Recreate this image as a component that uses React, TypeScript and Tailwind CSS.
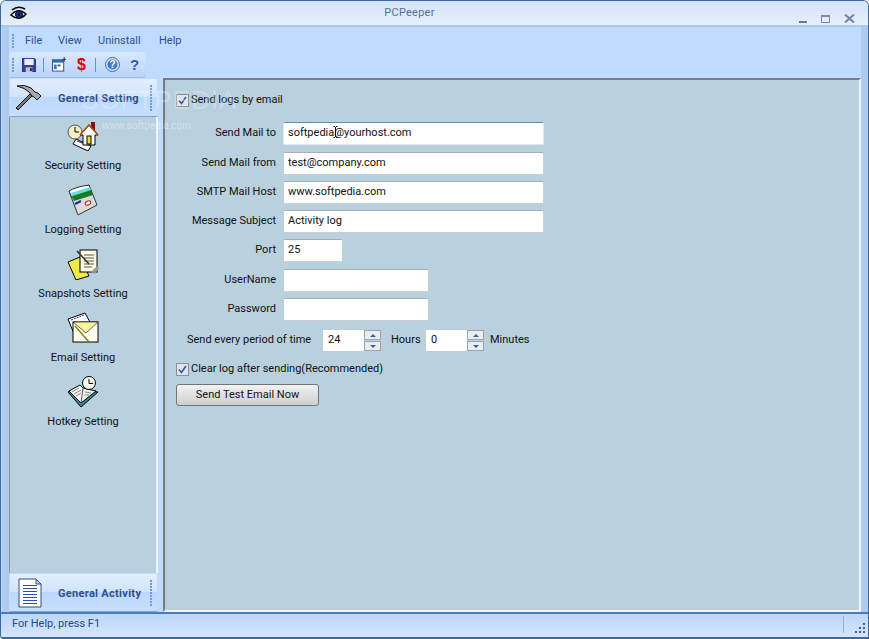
import React from "react";

const font = { fontFamily: 'Roboto, Tahoma, sans-serif' };

function Eye() {
  return (
    <svg width="18" height="16" viewBox="0 0 18 16">
      <path d="M2 4 Q8 -1 15 3" fill="none" stroke="#000" strokeWidth="1.6" />
      <path d="M1 9 Q8 1 16 8 Q9 16 1 9Z" fill="#fff" stroke="#000" strokeWidth="1.6" />
      <circle cx="9" cy="8.5" r="3.6" fill="#16398c" stroke="#000" />
      <circle cx="9" cy="8.5" r="1.3" fill="#000" />
    </svg>
  );
}
function Floppy() {
  return (
    <svg width="14" height="14" viewBox="0 0 15 15">
      <path d="M0 0H13L15 2V15H0Z" fill="#3a3f9e" stroke="#1e2370" strokeWidth=".6" />
      <rect x="2.5" y="1" width="10" height="6.5" fill="#e8ecf8" />
      <rect x="4" y="10" width="7" height="5" fill="#c0c4d8" />
      <rect x="8.5" y="11" width="2" height="3" fill="#222" />
    </svg>
  );
}
function Calendar() {
  return (
    <svg width="15" height="15" viewBox="0 0 16 16">
      <rect x="0.5" y="3" width="12" height="12" fill="#fff" stroke="#28527f" />
      <rect x="0.5" y="3" width="12" height="3" fill="#2b6fb0" />
      <rect x="2" y="8" width="3" height="5" fill="#2f7cc0" />
      <rect x="6" y="8" width="3" height="2" fill="#555" />
      <path d="M13 0V5M11 2.5H15" stroke="#334" />
    </svg>
  );
}
function HelpCircle() {
  return (
    <svg width="15" height="15" viewBox="0 0 15 15">
      <circle cx="7.5" cy="7.5" r="7" fill="#cfe0f8" stroke="#3f6fb5" />
      <circle cx="7.5" cy="7.5" r="5" fill="#3f78cf" />
      <text x="7.5" y="11" textAnchor="middle" fontSize="10" fontWeight="700" fill="#fff" fontFamily="Liberation Sans">?</text>
    </svg>
  );
}
function Hammer() {
  return (
    <svg width="27" height="27" viewBox="0 0 27 27">
      <path d="M1 24 L3 26 L17 12 L15 10Z" fill="#777" stroke="#111" strokeWidth="1" />
      <path d="M2 2 Q10 0 16 4 L20 8 L23 9 L26 12 L22 16 L19 13 L17 12 L14 8 Q10 4 2 2Z" fill="#a8a8a8" stroke="#111" strokeWidth="1" />
    </svg>
  );
}
function Doc() {
  return (
    <svg width="24" height="30" viewBox="0 0 24 30" className="ml-[3px]">
      <path d="M1 1H18L23 6V29H1Z" fill="#fff" stroke="#3b4d70" />
      <path d="M18 1V6H23Z" fill="#c8d0dc" stroke="#3b4d70" />
      {[7, 10, 13, 16, 19, 22, 25].map((y) => (
        <path key={y} d={`M5 ${y}.5H19`} stroke="#2a4db8" />
      ))}
    </svg>
  );
}
function Home() {
  return (
    <svg width="32" height="30" viewBox="0 0 32 30">
      <path d="M9 18 L24 25 L21 30 L6 23Z" fill="#fff" stroke="#000" />
      <path d="M10 20 L20 24" stroke="#2233aa" />
      <circle cx="8" cy="11" r="7" fill="#f4f0c4" stroke="#555" />
      <path d="M8 6V11H12" stroke="#000" fill="none" />
      <rect x="24" y="1" width="4" height="8" fill="#7a1010" />
      <path d="M13 14 L22 4 L31 14 L28 14 V24 H16 V14Z" fill="#fff" stroke="#000" />
      <path d="M13 14 L22 4 L31 14" fill="none" stroke="#b04a10" strokeWidth="1.6" />
      <rect x="20" y="15" width="4" height="8" fill="#e8e040" stroke="#000" />
    </svg>
  );
}
function Calc() {
  return (
    <svg width="32" height="32" viewBox="0 0 32 32">
      <path d="M2 7 L22 1 L30 21 L11 31Z" fill="#dcdcdc" stroke="#333" />
      <path d="M2 7 Q8 3 22 1 L24 7 L5 14Z" fill="#fff" stroke="#333" />
      <path d="M4 9 L23 3 L24 6 L5 12Z" fill="#66e0e0" />
      <path d="M5 12 L24 6 L26 11 L7 17Z" fill="#157a2a" />
      <path d="M8 20 L14 17" stroke="#1a2aa8" strokeWidth="2" />
      <ellipse cx="21" cy="19" rx="3" ry="2" fill="#fff" stroke="#b02020" transform="rotate(-25 21 19)" />
    </svg>
  );
}
function Notes() {
  return (
    <svg width="32" height="32" viewBox="0 0 32 32">
      <path d="M1 14 L13 9 L22 28 L9 32Z" fill="#efe94a" stroke="#000" />
      <rect x="13" y="2" width="17" height="22" fill="#fffde0" stroke="#000" />
      <path d="M17 7H27M17 10H27M17 13H27M17 16H27M17 19H25" stroke="#555" />
      <path d="M10 3 L22 16" stroke="#333" strokeWidth="1.5" />
      <path d="M30 18 L32 20 L28 26 L24 24Z" fill="#999" />
    </svg>
  );
}
function Mail() {
  return (
    <svg width="32" height="32" viewBox="0 0 32 32">
      <path d="M1 7 L18 1 L24 12 L8 24Z" fill="#fff" stroke="#000" />
      <path d="M4 8 L17 3" stroke="#2233aa" strokeDasharray="2 1" />
      <rect x="6" y="10" width="25" height="20" fill="#fffef0" stroke="#000" />
      <path d="M6 10 L19 21 L31 10Z" fill="#f8f5a0" stroke="#000" strokeWidth=".6" />
      <path d="M8 14 L22 30" stroke="#7a7a10" strokeWidth="1.4" />
    </svg>
  );
}
function Book() {
  return (
    <svg width="32" height="32" viewBox="0 0 32 32">
      <path d="M1 16 L13 10 L16 14 L31 16 L14 31Z" fill="#2f8c8c" stroke="#000" />
      <path d="M2 15 L13 9 L16 12 L29 15 L14 27Z" fill="#f4f4f4" stroke="#000" />
      <path d="M16 12 L14 27" stroke="#555" />
      <path d="M5 16 L12 12M7 18 L14 14M9 20 L14 17M18 16 L24 17M17 19 L22 19" stroke="#888" />
      <circle cx="22" cy="7" r="6.5" fill="#f6f6f0" stroke="#000" />
      <path d="M22 3V7.5H26" stroke="#000" fill="none" />
    </svg>
  );
}
function Grip({ className, n = 5 }: { className: string; n?: number }) {
  return (
    <div className={`flex flex-col gap-[1px] ${className}`}>
      {Array.from({ length: n }).map((_, i) => (
        <div key={i} className="w-[2px] h-[2px] bg-[#6f9bdc]" />
      ))}
    </div>
  );
}
function Check() {
  return (
    <div className="w-[13px] h-[13px] border border-[#8f8f8f] bg-[#dfe4ea] flex items-center justify-center shrink-0">
      <svg width="9" height="9" viewBox="0 0 9 9">
        <path d="M1 4.5 L3.5 7.5 L8 1" fill="none" stroke="#3b55a8" strokeWidth="1.6" />
      </svg>
    </div>
  );
}
function FormRow({ label, value, w, mt, focus }: { label: string; value: string; w: string; mt: string; focus?: boolean }) {
  return (
    <div className={`flex items-center ${mt}`}>
      <div className="w-[107px] text-right text-[#111] pr-[7px] pb-[2px]">{label}</div>
      <div className={`${w} h-[23px] bg-white border ${focus ? "border-[#dfe8ef] border-t-[#5d8db8]" : "border-[#c6ced6] border-t-[#abadb3]"} rounded-[2px] pl-[4px] pb-[2px] flex items-center text-[#111]`}>{value}</div>
    </div>
  );
}
function Spin({ value }: { value: string }) {
  return (
    <div className="flex w-[60px] h-[23px] bg-white border border-[#c4ccd4] pl-[5px] items-center text-[#111]">
      <span className="flex-1 pb-[2px]">{value}</span>
      <div className="flex flex-col w-[17px] h-full gap-[1px] bg-[#b9d0de]">
        {["M1 4L4 1L7 4Z", "M1 1L4 4L7 1Z"].map((d) => (
          <div key={d} className="flex-1 border border-[#9aa4ae] bg-[#e8edf2] flex items-center justify-center">
            <svg width="8" height="5" viewBox="0 0 8 5"><path d={d} fill="#3a5f9c" /></svg>
          </div>
        ))}
      </div>
    </div>
  );
}
function NavItem({ icon, label, mt }: { icon: React.ReactNode; label: string; mt: string }) {
  return (
    <div className={`flex flex-col items-center ${mt}`}>
      <div className="h-[32px] flex items-center justify-center">{icon}</div>
      <div className="mt-[7px] leading-[14px] text-[#111]">{label}</div>
    </div>
  );
}
function PanelButton({ icon, label, h, pt }: { icon: React.ReactNode; label: string; h: string; pt: string }) {
  return (
    <div className={`relative ${h} flex items-center bg-[linear-gradient(to_bottom,#e2eefd_0%,#d2e4fb_48%,#bdd8fd_50%,#c8dffc_100%)] border border-[#c5daf6] border-b-[#7ea5dc]`}>
      <div className="w-[48px] pl-[5px] flex justify-start">{icon}</div>
      <div className={`font-bold text-[#2f4f8f] tracking-[0.3px] ${pt}`}>{label}</div>
      <Grip className="absolute right-[5px] top-1/2 -translate-y-1/2" n={9} />
    </div>
  );
}

export default function App() {
  return (
    <div style={font} className="w-[869px] h-[639px] flex flex-col text-[11px] leading-[14px] bg-[#bfdbff] border border-[#3d6a9e] border-b-2 rounded-t-[6px] rounded-bl-[4px] overflow-hidden relative">
      <div className="h-[26px] shrink-0 flex items-center relative bg-gradient-to-b from-[#d3e2f7] to-[#e6f0fc] border-b-2 border-[#a9c9f0]">
        <div className="absolute left-[9px] top-[5px]"><Eye /></div>
        <div className="flex-1 text-center text-[#5b6f90] pr-[50px] -mt-[1px] tracking-[0.25px]">PCPeeper</div>
        <div className="absolute right-[13px] top-[13px] flex items-center">
          <div className="w-[8px] h-[2px] bg-[#6b7a90] mr-[14px] mt-[6px]" />
          <div className="w-[9px] h-[8px] border border-[#7a8ca8] border-t-2 mr-[14px]" />
          <svg width="11" height="9" viewBox="0 0 11 9"><path d="M1 0.5L10 8.5M10 0.5L1 8.5" stroke="#6f86a8" strokeWidth="2" /></svg>
        </div>
      </div>

      <div className="flex-1 flex min-h-0">
        <div className="w-[7px] shrink-0 bg-[#afcbf0] ml-[1px]" />
        <div className="flex-1 flex flex-col min-w-0">
          <div className="h-[25px] flex items-center pl-[3px] text-[#2f4f8f] shrink-0 pt-[2px]">
            <Grip className="mr-[11px]" />
            <span className="w-[33px]">File</span>
            <span className="w-[40px]">View</span>
            <span className="w-[61px]">Uninstall</span>
            <span>Help</span>
          </div>
          <div className="h-[26px] w-[137px] shrink-0 flex items-center pl-[3px] rounded-r-[4px] rounded-tl-[3px] bg-gradient-to-b from-[#d8e7fc] to-[#b9d5fb] border-b border-[#9dbce6]">
            <Grip className="mr-[8px]" />
            <Floppy />
            <div className="w-[1px] h-[14px] bg-[#6f8fbf] ml-[7px] mr-[8px]" />
            <Calendar />
            <div className="w-[10px]" />
            <span className="text-[#e00000] font-bold text-[16px] w-[9px] text-center" style={{ fontFamily: '"Liberation Sans", sans-serif' }}>$</span>
            <div className="w-[1px] h-[14px] bg-[#6f8fbf] mx-[9px]" />
            <HelpCircle />
            <span className="ml-[10px] text-[#2f5fa8] font-bold text-[15px]" style={{ fontFamily: '"Liberation Sans", sans-serif' }}>?</span>
          </div>
          <div className="flex-1 flex min-h-0">
            <div className="w-[149px] shrink-0 flex flex-col">
              <PanelButton icon={<Hammer />} label="General Setting" h="h-[39px]" pt="pt-[3px]" />
              <div className="flex-1 bg-[#b9d0de] border-r-2 border-l border-[#eef4f8] border-l-[#8a9aa8]">
                <NavItem icon={<Home />} label="Security Setting" mt="mt-[3px]" />
                <NavItem icon={<Calc />} label="Logging Setting" mt="mt-[11px]" />
                <NavItem icon={<Notes />} label="Snapshots Setting" mt="mt-[11px]" />
                <NavItem icon={<Mail />} label="Email Setting" mt="mt-[11px]" />
                <NavItem icon={<Book />} label="Hotkey Setting" mt="mt-[11px]" />
              </div>
              <PanelButton icon={<Doc />} label="General Activity" h="h-[39px]" pt="pt-[2px]" />
            </div>
            <div className="w-[5px] shrink-0" />
            <div className="flex-1 bg-[#b9d0de] border-t-2 border-l-2 border-[#777c82] border-r-2 border-r-[#eef4f8] border-b-2 border-b-[#eef4f8]">
              <div className="pl-[11px] pt-[13px] flex flex-col">
                <div className="flex items-center gap-[2px] text-[#111]"><Check />Send logs by email</div>
                <FormRow label="Send Mail to" value="softpedia@yourhost.com" w="w-[261px]" mt="mt-[15px]" focus />
                <FormRow label="Send Mail from" value="test@company.com" w="w-[261px]" mt="mt-[7px]" />
                <FormRow label="SMTP Mail Host" value="www.softpedia.com" w="w-[261px]" mt="mt-[6px]" />
                <FormRow label="Message Subject" value="Activity log" w="w-[261px]" mt="mt-[6px]" />
                <FormRow label="Port" value="25" w="w-[60px]" mt="mt-[6px]" />
                <FormRow label="UserName" value="" w="w-[146px]" mt="mt-[7px]" />
                <FormRow label="Password" value="" w="w-[146px]" mt="mt-[6px]" />
                <div className="flex items-center mt-[8px] text-[#111]">
                  <span className="ml-[11px] w-[135px] pb-[2px]">Send every period of time</span>
                  <Spin value="24" />
                  <span className="ml-[9px] w-[29px] mr-[5px] pb-[2px]">Hours</span>
                  <Spin value="0" />
                  <span className="ml-[5px] pb-[2px]">Minutes</span>
                </div>
                <div className="flex items-center gap-[2px] mt-[10px] text-[#111]"><Check />Clear log after sending(Recommended)</div>
                <div className="mt-[8px] w-[143px] h-[22px] border border-[#70757a] rounded-[3px] bg-gradient-to-b from-[#f2f2f2] to-[#cfcfcf] flex items-center justify-center text-[#111]">Send Test Email Now</div>
              </div>
            </div>
          </div>
        </div>
        <div className="w-[7px] shrink-0 bg-[#afcbf0]" />
      </div>

      <div className="h-[25px] shrink-0 flex items-center pl-[11px] pb-[3px] bg-gradient-to-b from-[#bcd6fa] to-[#d5e5fb] border-t-2 border-[#4d7bb5] text-[#2a4a80] relative">
        For Help, press F1
        <div className="absolute right-[24px] top-[2px] h-[17px] w-[1px] bg-[#9ab2d4]" />
        <div className="absolute right-[3px] bottom-[4px] grid grid-cols-3 gap-[2px]">
          {[0, 0, 1, 0, 1, 1, 1, 1, 1].map((on, i) => (
            <div key={i} className={`w-[2px] h-[2px] ${on ? "bg-[#4a5f80]" : ""}`} />
          ))}
        </div>
      </div>

      <div className="absolute left-[80px] top-[84px] text-[26px] leading-[30px] tracking-[1px] text-white/25 pointer-events-none" style={{ fontFamily: '"Liberation Sans", sans-serif' }}>SOFTPEDIA</div>
      <div className="absolute left-[101px] top-[118px] text-[10px] text-white/40 pointer-events-none">www.softpedia.com</div>
      <svg className="absolute left-[332px] top-[125px] pointer-events-none" width="5" height="12" viewBox="0 0 5 12"><path d="M0.5 0.5H2M3 0.5H4.5M2.5 1V11M0.5 11.5H2M3 11.5H4.5" stroke="#111" strokeWidth="1" fill="none" /></svg>
    </div>
  );
}
